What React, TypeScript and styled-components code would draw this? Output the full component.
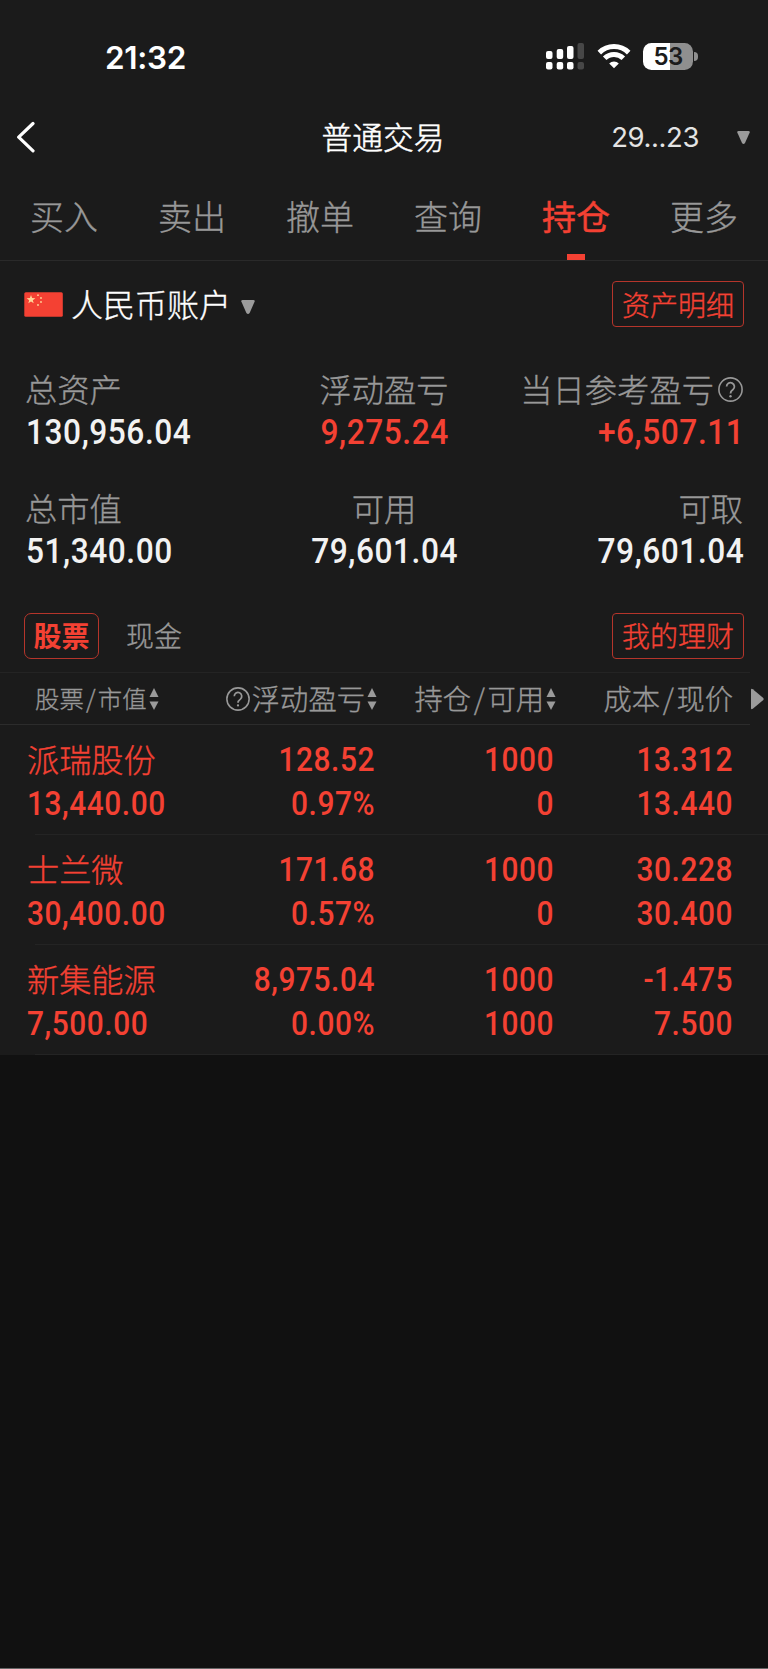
import React from 'react';
import styled, { createGlobalStyle } from 'styled-components';

const RED = '#f44133';
const GREY = '#989898';
const WHITE = '#f2f2f2';

const GlobalStyle = createGlobalStyle`
  * {
    box-sizing: border-box;
  }

  body {
    margin: 0;
    background: #111111;
    font-family: 'Noto Sans CJK SC', sans-serif;
    font-weight: 300;
    -webkit-text-stroke: 0.35px currentColor;
    color: ${WHITE};
  }
`;

const Page = styled.div`
  width: 768px;
  height: 1669px;
  background: #111111;
  border-bottom: 1px solid #666666;
`;

const Panel = styled.main`
  background: #1b1b1b;
`;

const StatusBar = styled.header`
  display: flex;
  align-items: center;
  justify-content: space-between;
  height: 112px;
  padding: 0 70px 0 105px;
`;

const Clock = styled.span`
  font-family: Inter, sans-serif;
  font-size: 31.5px;
  font-weight: 600;
  -webkit-text-stroke: 0;
  letter-spacing: -0.3px;
  line-height: 38px;
  color: #ffffff;
  margin-top: 3px;
`;

const NavBar = styled.nav`
  display: grid;
  grid-template-columns: 250px 1fr 250px;
  align-items: center;
  height: 50px;
  padding: 0 18px 0 16px;
`;

const PageTitle = styled.h1`
  margin: 0 0 3px;
  font-size: 30.7px;
  font-weight: 300;
  -webkit-text-stroke: 0.5px currentColor;
  line-height: 44px;
  text-align: center;
  color: #ffffff;
`;

const AccountNo = styled.div`
  display: flex;
  align-items: center;
  justify-content: flex-end;
  gap: 38px;
  font-family: Inter, sans-serif;
  font-size: 27.5px;
  font-weight: 400;
  -webkit-text-stroke: 0;
  letter-spacing: -0.4px;
  color: #e4e4e4;
`;

const TabBar = styled.div`
  display: grid;
  grid-template-columns: repeat(6, 128px);
  height: 99px;
  border-bottom: 1px solid #2a2a2a;
`;

const Tab = styled.div<{ $active?: boolean }>`
  display: flex;
  flex-direction: column;
  align-items: center;
  justify-content: space-between;
  padding-top: 29px;
  font-size: 34px;
  font-weight: ${({ $active }) => ($active ? 400 : 300)};
  -webkit-text-stroke: ${({ $active }) => ($active ? '0.5px' : '0.35px')} currentColor;
  line-height: 50px;
  color: ${({ $active }) => ($active ? RED : GREY)};

  &::after {
    content: '';
    width: 18px;
    height: 6px;
    background: ${({ $active }) => ($active ? RED : 'transparent')};
  }
`;

const Bar = styled.div<{ $height: number }>`
  display: flex;
  align-items: center;
  justify-content: space-between;
  height: ${({ $height }) => $height}px;
  padding: 0 24px;
`;

const Account = styled.div`
  display: flex;
  align-items: center;
  font-size: 32px;
  line-height: 46px;
  color: #ffffff;

  svg:first-child {
    margin-right: 8px;
  }

  svg:last-child {
    margin: 5px 0 0 10px;
  }
`;

const AccountName = styled.span`
  margin-bottom: 2px;
`;

const OutlineButton = styled.button`
  height: 46px;
  padding: 0 9px 1px;
  border: 1px solid #b5352b;
  border-radius: 4px;
  background: transparent;
  font-family: inherit;
  font-size: 28px;
  font-weight: 300;
  -webkit-text-stroke: 0.35px currentColor;
  line-height: 42px;
  color: ${RED};
`;

const Summary = styled.section`
  display: grid;
  grid-template-columns: 1fr 1fr 1fr;
  row-gap: 31px;
  padding: 20px 25px 0;
  height: 252px;
  align-content: start;
`;

const Stat = styled.div<{ $align: string }>`
  text-align: ${({ $align }) => $align};
  white-space: nowrap;
`;

const StatLabel = styled.div<{ $align: string }>`
  display: flex;
  align-items: center;
  justify-content: ${({ $align }) => $align};
  gap: 4px;
  margin-bottom: 2px;
  font-size: 32.3px;
  line-height: 42px;
  color: ${GREY};

  svg {
    margin-top: 2px;
  }
`;

/* Narrow DIN-like digits */
const Amount = styled.div<{ $size: number; $origin: string }>`
  margin: 0 -1px 0 1px;
  font-family: Roboto, sans-serif;
  font-size: ${({ $size }) => $size}px;
  font-weight: 500;
  -webkit-text-stroke: 0;
  letter-spacing: 0.6px;
  line-height: 44px;
  transform: scaleX(0.905);
  transform-origin: ${({ $origin }) => $origin};
`;

const StatAmount = styled(Amount)<{ $red?: boolean }>`
  color: ${({ $red }) => ($red ? RED : WHITE)};
`;

const Chips = styled.div`
  display: flex;
  align-items: center;
  gap: 26px;
`;

const Chip = styled.span<{ $active?: boolean }>`
  height: 46px;
  padding: ${({ $active }) => ($active ? '0 8.5px' : '0')};
  border: ${({ $active }) => ($active ? '1px solid #b5352b' : '1px solid transparent')};
  border-radius: 7px;
  font-size: 28px;
  font-weight: ${({ $active }) => ($active ? 700 : 300)};
  -webkit-text-stroke: ${({ $active }) => ($active ? '0' : '0.35px currentColor')};
  line-height: 42px;
  color: ${({ $active }) => ($active ? RED : GREY)};
`;

const TableHead = styled.div`
  display: grid;
  grid-template-columns: 168px 179px 179px 179px 36px;
  align-items: center;
  width: 750px;
  height: 53px;
  padding-left: 27px;
  border-top: 1px solid #242424;
  border-bottom: 1px solid #2c2c2c;
`;

const HeadCell = styled.div<{ $first?: boolean; $sortable?: boolean }>`
  display: flex;
  align-items: center;
  justify-content: ${({ $first }) => ($first ? 'flex-start' : 'flex-end')};
  gap: 2px;
  margin-left: ${({ $first }) => ($first ? '8px' : '0')};
  margin-right: ${({ $sortable }) => ($sortable ? '-3px' : '-1px')};
  font-size: ${({ $first }) => ($first ? '24.4px' : '28.3px')};
  line-height: 42px;
  white-space: nowrap;
  color: ${GREY};
`;

const HeadText = styled.span`
  margin-bottom: 2px;
`;

const Slash = styled.span`
  margin: 0 0.09em;
`;

const MoreColumns = styled.div`
  display: flex;
  margin-left: 19px;
`;

const Row = styled.div`
  display: grid;
  grid-template-columns: 168px 179px 179px 179px;
  height: 110px;
  padding: 13px 0 0 27px;
  color: ${RED};
  background: linear-gradient(#242424, #242424) 35px 100% / 100% 1px no-repeat;
`;

const Cell = styled.div<{ $first?: boolean }>`
  text-align: ${({ $first }) => ($first ? 'left' : 'right')};

  ${Amount} {
    margin-left: ${({ $first }) => ($first ? '0' : '1px')};
  }
`;

const StockName = styled.div`
  margin-bottom: 3px;
  font-size: 32.2px;
  line-height: 41px;
`;

const StatusIcons = styled.div`
  display: flex;
  align-items: center;
  gap: 12px;
`;

const Battery = styled.div`
  display: flex;
  align-items: center;
  gap: 1px;
`;

const BatteryBody = styled.div`
  width: 50px;
  height: 27px;
  border-radius: 8.5px;
  background: linear-gradient(90deg, #ffffff 27px, #8f8f8f 27px);
  font-family: Inter, sans-serif;
  font-size: 24px;
  font-weight: 600;
  -webkit-text-stroke: 0;
  letter-spacing: -0.6px;
  line-height: 27px;
  text-align: center;
  color: #1b1b1b;
`;

const BatteryTip = styled.div`
  width: 4px;
  height: 9px;
  border-radius: 0 4px 4px 0;
  background: #8f8f8f;
`;

const SignalIcon = () => (
  <svg width="40" height="28" viewBox="0 0 40 28">
    <g fill="#ffffff">
      <rect x="1" y="9" width="6.5" height="8" rx="2" />
      <rect x="11.7" y="7" width="6.5" height="10" rx="2" />
      <rect x="22" y="4" width="6.5" height="13" rx="2" />
      <rect x="1" y="20" width="6.5" height="7.5" rx="2" />
      <rect x="11.7" y="20" width="6.5" height="7.5" rx="2" />
      <rect x="22" y="20" width="6.5" height="7.5" rx="2" />
    </g>
    <g fill="#474747">
      <rect x="32.5" y="1" width="6.5" height="16" rx="2" />
      <rect x="32.5" y="20" width="6.5" height="7.5" rx="2" />
    </g>
  </svg>
);

const WifiIcon = () => (
  <svg width="34" height="26" viewBox="0 0 34 26">
    <g fill="none" stroke="#ffffff" strokeWidth="5">
      <path d="M2.3 9.6a21 21 0 0 1 29.4 0" />
      <path d="M7.7 15.3a13.2 13.2 0 0 1 18.6 0" />
    </g>
    <path d="M17 25.3l-4.8-4.9a6.8 6.8 0 0 1 9.6 0z" fill="#ffffff" />
  </svg>
);

const BackIcon = () => (
  <svg width="20" height="32" viewBox="0 0 20 32" fill="none" stroke="#ffffff" strokeWidth="3.2" strokeLinecap="round" strokeLinejoin="round">
    <path d="M17 2.5L2.7 16.2L17 29.8" />
  </svg>
);

const DownIcon = ({ size = 13 }: { size?: number }) => (
  <svg width={size} height={size} viewBox="0 0 13 13" fill="#9b9b9b">
    <path d="M1.5 0h10q1.5 0 1.2 1.5L8 12q-1.5 2-3 0L.3 1.5Q0 0 1.5 0z" />
  </svg>
);

const STAR = '0,-4.6 1.1,-1.5 4.4,-1.4 1.8,.6 2.7,3.7 0,1.9 -2.7,3.7 -1.8,.6 -4.4,-1.4 -1.1,-1.5';

const FlagIcon = () => (
  <svg width="39" height="25" viewBox="0 0 39 25">
    <rect x="0.3" y="0.3" width="38.5" height="24.4" rx="1.5" fill={RED} />
    <g fill="#ffd699">
      <polygon points={STAR} transform="translate(7 7.6)" />
      <circle cx="14" cy="3.2" r="0.9" />
      <circle cx="17" cy="6" r="0.9" />
      <circle cx="17" cy="10" r="0.9" />
      <circle cx="14" cy="13" r="0.9" />
    </g>
  </svg>
);

const HelpIcon = ({ size }: { size: number }) => (
  <svg width={size} height={size} viewBox="0 0 25 25" fill="none" stroke={GREY} strokeWidth="1.6">
    <circle cx="12.5" cy="12.5" r="11.6" />
    <path d="M8.6 9.6a3.9 3.9 0 1 1 6.4 3q-2.5 1.8-2.5 3.8" strokeWidth="1.8" />
    <circle cx="12.5" cy="19.2" r="1.2" fill={GREY} stroke="none" />
  </svg>
);

const SortIcon = () => (
  <svg width="10" height="22" viewBox="0 0 10 22" fill="#9b9b9b">
    <path d="M5 0l4.5 9H.5z" />
    <path d="M5 22l4.5-8.5H.5z" />
  </svg>
);

const RightIcon = () => (
  <svg width="13" height="22" viewBox="0 0 13 22" fill="#9b9b9b">
    <path d="M0 2q0-2 1.8-.8L12 9.7q1.4 1.3 0 2.6L1.8 20.8Q0 22 0 20z" />
  </svg>
);

const tabs = ['买入', '卖出', '撤单', '查询', '持仓', '更多'];

const stats = [
  { label: '总资产', value: '130,956.04' },
  { label: '浮动盈亏', value: '9,275.24', red: true },
  { label: '当日参考盈亏', value: '+6,507.11', red: true, help: true },
  { label: '总市值', value: '51,340.00' },
  { label: '可用', value: '79,601.04' },
  { label: '可取', value: '79,601.04' },
];

const holdings = [
  { name: '派瑞股份', value: '13,440.00', cells: [['128.52', '0.97%'], ['1000', '0'], ['13.312', '13.440']] },
  { name: '士兰微', value: '30,400.00', cells: [['171.68', '0.57%'], ['1000', '0'], ['30.228', '30.400']] },
  { name: '新集能源', value: '7,500.00', cells: [['8,975.04', '0.00%'], ['1000', '1000'], ['-1.475', '7.500']] },
];

const aligns = ['left', 'center', 'right'];

export default function App() {
  return (
    <Page>
      <GlobalStyle />
      <Panel>
        <StatusBar>
          <Clock>21:32</Clock>
          <StatusIcons>
            <SignalIcon />
            <WifiIcon />
            <Battery>
              <BatteryBody>53</BatteryBody>
              <BatteryTip />
            </Battery>
          </StatusIcons>
        </StatusBar>
        <NavBar>
          <BackIcon />
          <PageTitle>普通交易</PageTitle>
          <AccountNo>
            29...23
            <DownIcon />
          </AccountNo>
        </NavBar>
        <TabBar>
          {tabs.map((tab) => (
            <Tab key={tab} $active={tab === '持仓'}>{tab}</Tab>
          ))}
        </TabBar>
        <Bar $height={86}>
          <Account>
            <FlagIcon />
            <AccountName>人民币账户</AccountName>
            <DownIcon size={14} />
          </Account>
          <OutlineButton>资产明细</OutlineButton>
        </Bar>
        <Summary>
          {stats.map(({ label, value, red, help }, i) => {
            const align = aligns[i % 3];
            return (
              <Stat key={label} $align={align}>
                <StatLabel $align={align}>
                  {label}
                  {help && <HelpIcon size={25} />}
                </StatLabel>
                <StatAmount $size={35} $origin={align} $red={red}>{value}</StatAmount>
              </Stat>
            );
          })}
        </Summary>
        <Bar $height={73}>
          <Chips>
            <Chip $active>股票</Chip>
            <Chip>现金</Chip>
          </Chips>
          <OutlineButton>我的理财</OutlineButton>
        </Bar>
        <TableHead>
          <HeadCell $first>
            <HeadText>股票<Slash>/</Slash>市值</HeadText>
            <SortIcon />
          </HeadCell>
          <HeadCell $sortable>
            <HelpIcon size={24} />
            <HeadText>浮动盈亏</HeadText>
            <SortIcon />
          </HeadCell>
          <HeadCell $sortable>
            <HeadText>持仓<Slash>/</Slash>可用</HeadText>
            <SortIcon />
          </HeadCell>
          <HeadCell>
            <HeadText>成本<Slash>/</Slash>现价</HeadText>
          </HeadCell>
          <MoreColumns><RightIcon /></MoreColumns>
        </TableHead>
        {holdings.map(({ name, value, cells }) => (
          <Row key={name}>
            <Cell $first>
              <StockName>{name}</StockName>
              <Amount $size={33} $origin="left">{value}</Amount>
            </Cell>
            {cells.map(([top, bottom], i) => (
              <Cell key={i}>
                <Amount $size={33} $origin="right">{top}</Amount>
                <Amount $size={33} $origin="right">{bottom}</Amount>
              </Cell>
            ))}
          </Row>
        ))}
      </Panel>
    </Page>
  );
}
